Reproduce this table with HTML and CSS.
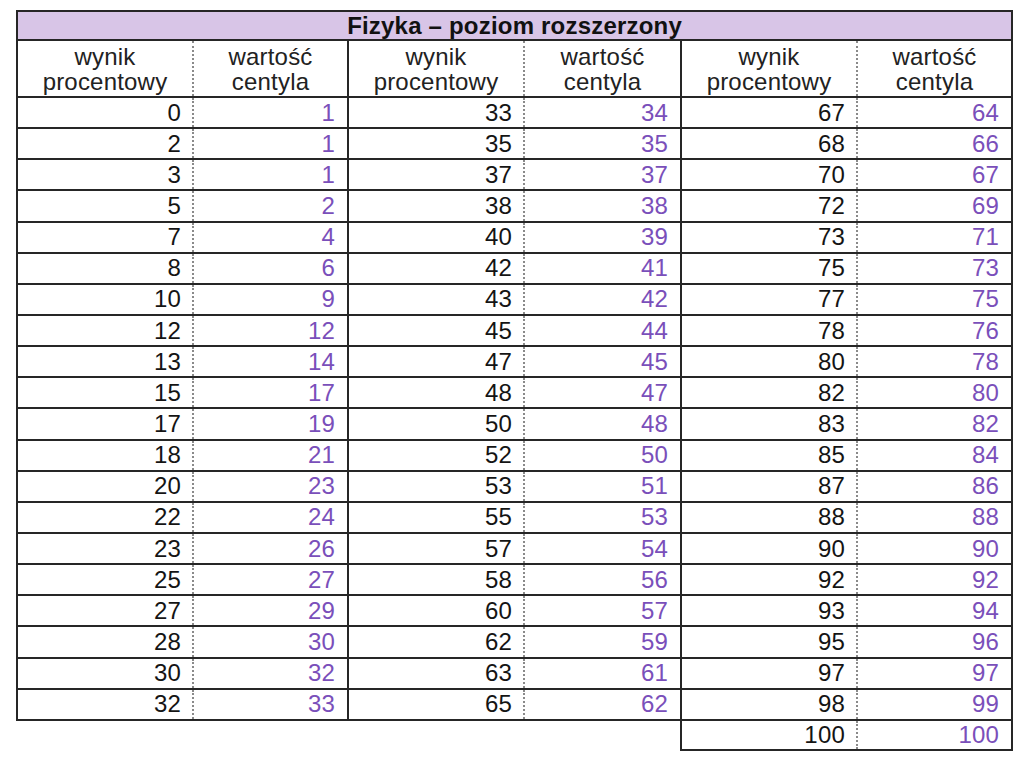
FILE: index.html
```html
<!DOCTYPE html>
<html lang="pl">
<head>
<meta charset="utf-8">
<title>Fizyka – poziom rozszerzony</title>
<link rel="stylesheet" href="styles.css">
</head>
<body>
<table class="centyle">
  <colgroup>
    <col class="w-a"><col class="w-b"><col class="w-a"><col class="w-c"><col class="w-a"><col class="w-b">
  </colgroup>
  <thead>
    <tr class="title-row"><th colspan="6" class="title">Fizyka – poziom rozszerzony</th></tr>
    <tr class="head-row">
      <th class="wyn">wynik<br>procentowy</th><th class="cen">wartość<br>centyla</th>
      <th class="wyn">wynik<br>procentowy</th><th class="cen">wartość<br>centyla</th>
      <th class="wyn">wynik<br>procentowy</th><th class="cen">wartość<br>centyla</th>
    </tr>
  </thead>
  <tbody>
    <tr><td class="wyn">0</td><td class="cen">1</td><td class="wyn">33</td><td class="cen">34</td><td class="wyn">67</td><td class="cen">64</td></tr>
    <tr><td class="wyn">2</td><td class="cen">1</td><td class="wyn">35</td><td class="cen">35</td><td class="wyn">68</td><td class="cen">66</td></tr>
    <tr><td class="wyn">3</td><td class="cen">1</td><td class="wyn">37</td><td class="cen">37</td><td class="wyn">70</td><td class="cen">67</td></tr>
    <tr><td class="wyn">5</td><td class="cen">2</td><td class="wyn">38</td><td class="cen">38</td><td class="wyn">72</td><td class="cen">69</td></tr>
    <tr><td class="wyn">7</td><td class="cen">4</td><td class="wyn">40</td><td class="cen">39</td><td class="wyn">73</td><td class="cen">71</td></tr>
    <tr><td class="wyn">8</td><td class="cen">6</td><td class="wyn">42</td><td class="cen">41</td><td class="wyn">75</td><td class="cen">73</td></tr>
    <tr><td class="wyn">10</td><td class="cen">9</td><td class="wyn">43</td><td class="cen">42</td><td class="wyn">77</td><td class="cen">75</td></tr>
    <tr><td class="wyn">12</td><td class="cen">12</td><td class="wyn">45</td><td class="cen">44</td><td class="wyn">78</td><td class="cen">76</td></tr>
    <tr><td class="wyn">13</td><td class="cen">14</td><td class="wyn">47</td><td class="cen">45</td><td class="wyn">80</td><td class="cen">78</td></tr>
    <tr><td class="wyn">15</td><td class="cen">17</td><td class="wyn">48</td><td class="cen">47</td><td class="wyn">82</td><td class="cen">80</td></tr>
    <tr><td class="wyn">17</td><td class="cen">19</td><td class="wyn">50</td><td class="cen">48</td><td class="wyn">83</td><td class="cen">82</td></tr>
    <tr><td class="wyn">18</td><td class="cen">21</td><td class="wyn">52</td><td class="cen">50</td><td class="wyn">85</td><td class="cen">84</td></tr>
    <tr><td class="wyn">20</td><td class="cen">23</td><td class="wyn">53</td><td class="cen">51</td><td class="wyn">87</td><td class="cen">86</td></tr>
    <tr><td class="wyn">22</td><td class="cen">24</td><td class="wyn">55</td><td class="cen">53</td><td class="wyn">88</td><td class="cen">88</td></tr>
    <tr><td class="wyn">23</td><td class="cen">26</td><td class="wyn">57</td><td class="cen">54</td><td class="wyn">90</td><td class="cen">90</td></tr>
    <tr><td class="wyn">25</td><td class="cen">27</td><td class="wyn">58</td><td class="cen">56</td><td class="wyn">92</td><td class="cen">92</td></tr>
    <tr><td class="wyn">27</td><td class="cen">29</td><td class="wyn">60</td><td class="cen">57</td><td class="wyn">93</td><td class="cen">94</td></tr>
    <tr><td class="wyn">28</td><td class="cen">30</td><td class="wyn">62</td><td class="cen">59</td><td class="wyn">95</td><td class="cen">96</td></tr>
    <tr><td class="wyn">30</td><td class="cen">32</td><td class="wyn">63</td><td class="cen">61</td><td class="wyn">97</td><td class="cen">97</td></tr>
    <tr><td class="wyn">32</td><td class="cen">33</td><td class="wyn">65</td><td class="cen">62</td><td class="wyn">98</td><td class="cen">99</td></tr>
    <tr class="extra"><td class="blank"></td><td class="blank"></td><td class="blank"></td><td class="blank"></td><td class="wyn">100</td><td class="cen">100</td></tr>
  </tbody>
</table>
</body>
</html>
```
FILE: styles.css
```css
html, body {
  margin: 0;
  padding: 0;
  background: #ffffff;
}

body {
  padding: 10px 0 0 16px;
  font-family: "Liberation Sans", Arial, sans-serif;
  color: #141414;
}

.centyle {
  border-collapse: collapse;
  table-layout: fixed;
  width: 994px;
  font-size: 24px;
  letter-spacing: 0.2px;
}

.w-a { width: 176px; }
.w-b { width: 155px; }
.w-c { width: 157px; }

.centyle th,
.centyle td {
  padding: 0;
  border: 2px solid #262626;
}

.title-row th {
  height: 27px;
  background: #d8c5e7;
  font-weight: bold;
  text-align: center;
  line-height: 26px;
  color: #111111;
}

.head-row th {
  height: 55px;
  font-weight: normal;
  text-align: center;
  line-height: 25px;
  vertical-align: middle;
  color: #222222;
}

.centyle td {
  height: 29.15px;
  line-height: 24px;
  text-align: right;
  vertical-align: middle;
}

.centyle .wyn {
  border-right: 2px dotted #8a8a8a;
}

.centyle td.wyn {
  padding-right: 11px;
  color: #141414;
}

.centyle .cen {
  border-left: 2px dotted #8a8a8a;
}

.centyle td.cen {
  padding-right: 12px;
  color: #7a4fba;
}

.centyle td.blank {
  border: none;
  border-top: 2px solid #262626;
}

.extra td {
  height: 28px;
}
```
